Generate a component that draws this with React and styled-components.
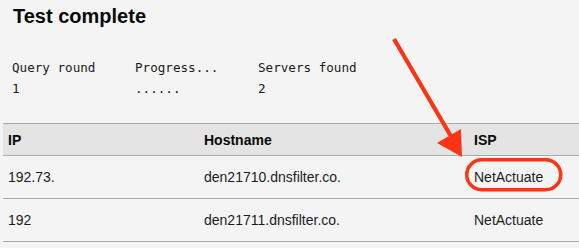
import React from "react";
import styled, { createGlobalStyle } from "styled-components";

const Global = createGlobalStyle`
  html, body { margin: 0; padding: 0; background: #f4f4f4; }
  body { width: 579px; height: 248px; overflow: hidden; }
`;

const Page = styled.div`
  position: relative;
  width: 579px;
  height: 248px;
  background: #f4f4f4;
  color: #111;
`;

const Title = styled.h1`
  margin: 0;
  padding: 5px 0 0 13px;
  font-family: "Liberation Sans", Arial, sans-serif;
  font-weight: bold;
  font-size: 20px;
  line-height: 23px;
  color: #0a0a0a;
`;

const Stats = styled.div`
  display: grid;
  grid-template-columns: repeat(3, 123px);
  margin-top: 29px;
  padding-left: 12px;
  font-family: "DejaVu Sans Mono", monospace;
  font-size: 12.6px;
  line-height: 21px;
  color: #1a1a1a;
`;

const Stat = styled.div`
  display: flex;
  flex-direction: column;
  white-space: pre;
`;

const Table = styled.div`
  margin: 24px 0 0 3px;
  font-family: "Liberation Sans", Arial, sans-serif;
  font-size: 14px;
  border-top: 1px solid #ababab;
`;

const Row = styled.div`
  display: grid;
  grid-template-columns: 196px 270px 1fr;
  height: ${(p) => (p.$head ? "31px" : "42px")};
  background: ${(p) => (p.$head ? "#e4e4e4" : "transparent")};
  border-bottom: 1px solid #ababab;
  font-weight: ${(p) => (p.$head ? "bold" : "normal")};
  color: ${(p) => (p.$head ? "#0a0a0a" : "#1c1c1c")};
`;

const Cell = styled.div`
  display: flex;
  align-items: center;
  padding-left: 5px;
  white-space: nowrap;
`;

const Overlay = styled.svg`
  position: absolute;
  left: 0;
  top: 0;
  pointer-events: none;
`;

const rows = [
  ["192.73.", "den21710.dnsfilter.co.", "NetActuate"],
  ["192", "den21711.dnsfilter.co.", "NetActuate"],
];

export default function App() {
  return (
    <Page>
      <Global />
      <Title>Test complete</Title>
      <Stats>
        <Stat><span>Query round</span><span>1</span></Stat>
        <Stat><span>Progress...</span><span>......</span></Stat>
        <Stat><span>Servers found</span><span>2</span></Stat>
      </Stats>
      <Table>
        <Row $head>
          <Cell>IP</Cell>
          <Cell>Hostname</Cell>
          <Cell>ISP</Cell>
        </Row>
        {rows.map((r, i) => (
          <Row key={i}>
            {r.map((c, j) => (
              <Cell key={j}>{c}</Cell>
            ))}
          </Row>
        ))}
      </Table>
      <Overlay width="579" height="248" viewBox="0 0 579 248">
        <line x1="394" y1="39" x2="452" y2="138" stroke="#fa3414" strokeWidth="4.2" />
        <polygon points="437,143 461,129 462,157" fill="#fa3414" />
        <rect x="466.75" y="159.75" width="94" height="30" rx="15" ry="15" fill="none" stroke="#fa3414" strokeWidth="3.5" />
      </Overlay>
    </Page>
  );
}
